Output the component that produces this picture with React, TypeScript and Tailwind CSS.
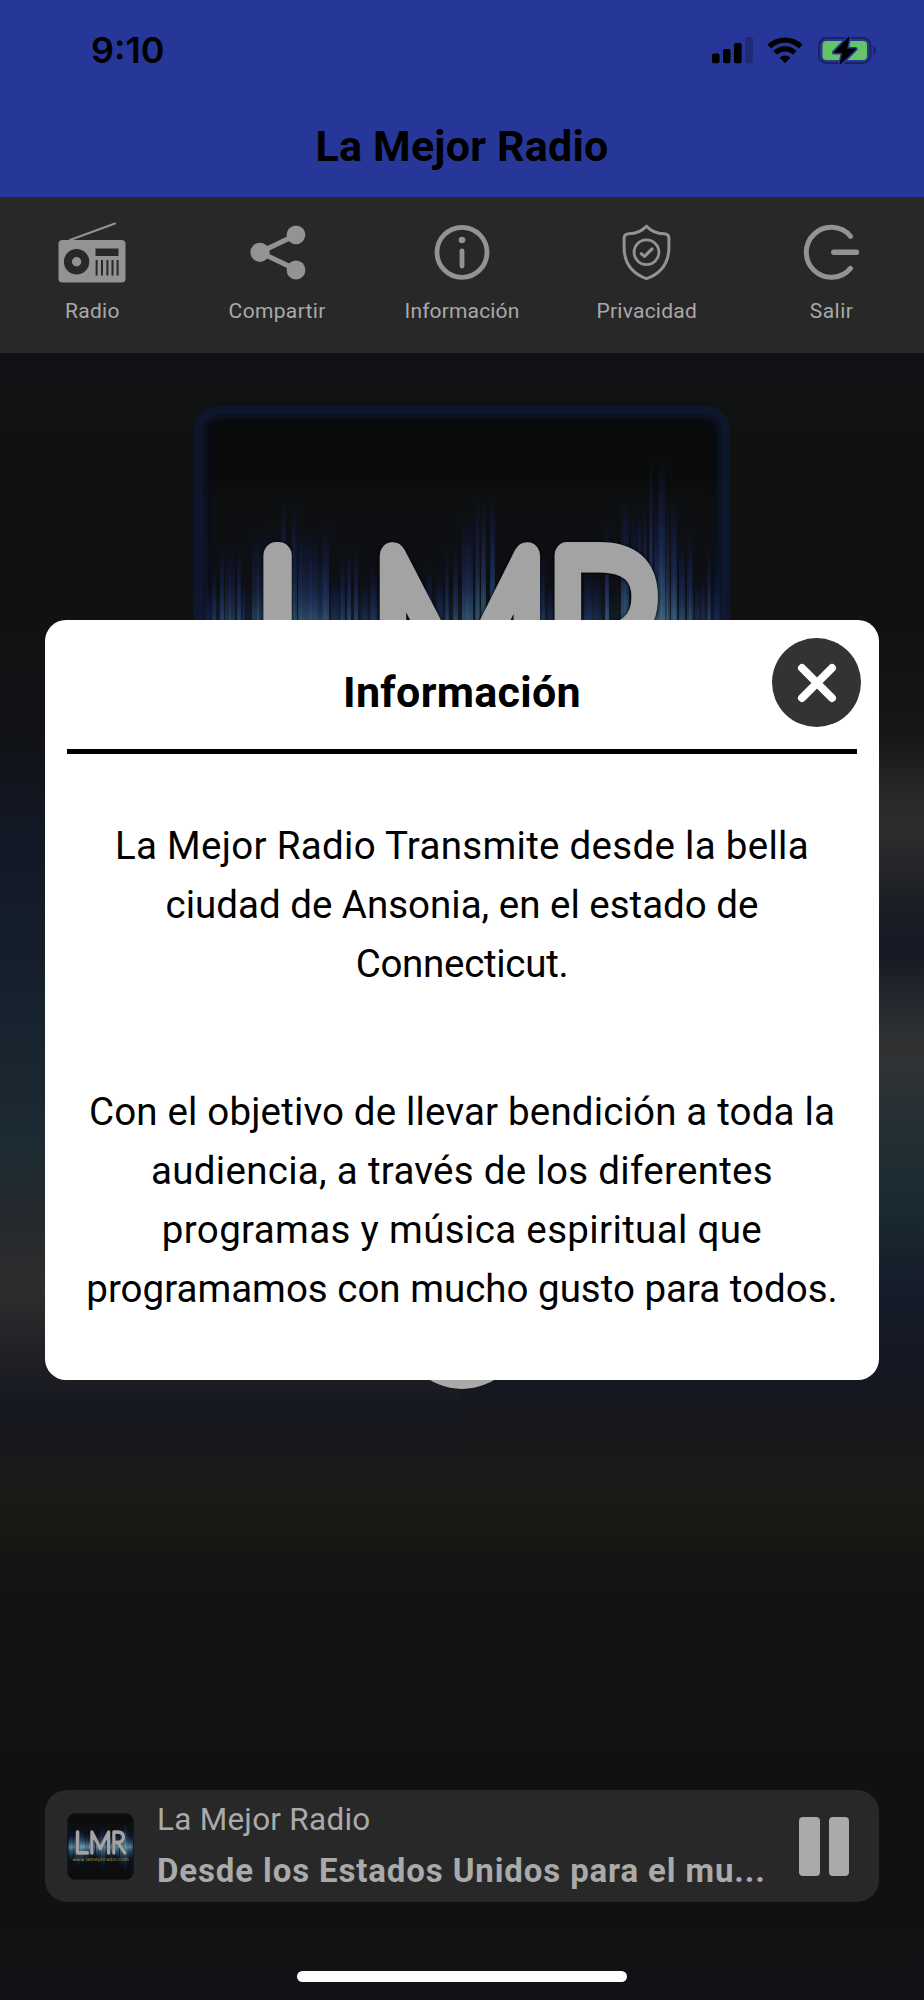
import clsx from 'clsx';

// x, width and top of every bar in the equalizer artwork (536x536 space)
const bars = [
   [12, 5, 177], [18, 4, 160], [26, 4, 140], [31, 10, 136], [43, 4, 140], [48, 3, 172],
   [58, 12, 121], [70, 16, 119], [87, 5, 90], [97, 6, 89], [104, 6, 119], [110, 14, 121],
   [124, 4, 140], [128, 7, 117], [137, 8, 168], [146, 5, 140], [153, 4, 140], [160, 4, 140],
   [167, 7, 170], [176, 7, 157], [200, 8, 177], [215, 6, 177], [232, 6, 158], [242, 7, 164],
   [251, 4, 138], [259, 5, 138], [268, 11, 107], [281, 5, 86], [287, 5, 88], [296, 5, 86],
   [303, 6, 168], [318, 8, 172], [335, 8, 172], [346, 5, 140], [354, 5, 177], [390, 8, 160],
   [398, 9, 164], [411, 4, 112], [427, 8, 88], [437, 6, 97], [443, 5, 97], [449, 4, 93],
   [455, 4, 49], [460, 4, 93], [464, 7, 49], [471, 5, 89], [477, 6, 88], [485, 6, 131],
   [493, 6, 119], [501, 5, 172], [507, 4, 168], [513, 4, 140], [520, 6, 157],
];

const Cover = ({ className, id }: { className?: string; id: string }) => (
   <svg viewBox="0 0 536 536" className={className}>
      <defs>
         <linearGradient id={`${id}-bar`} x1="0" y1="0" x2="0" y2="1">
            <stop offset="0" stopColor="#11183c" stopOpacity="0" />
            <stop offset="0.1" stopColor="#141d48" stopOpacity="0.5" />
            <stop offset="0.22" stopColor="#1e3260" stopOpacity="0.75" />
            <stop offset="0.36" stopColor="#3f6c88" stopOpacity="0.9" />
            <stop offset="0.5" stopColor="#7fb4cc" />
            <stop offset="0.64" stopColor="#3f6c88" stopOpacity="0.9" />
            <stop offset="0.9" stopColor="#141d48" stopOpacity="0.4" />
            <stop offset="1" stopColor="#11183c" stopOpacity="0" />
         </linearGradient>
         <linearGradient id={`${id}-bg`} x1="0" y1="0" x2="0" y2="1">
            <stop offset="0" stopColor="#0a0c0b" />
            <stop offset="0.14" stopColor="#0a0c0b" />
            <stop offset="0.18" stopColor="#0d0f11" />
            <stop offset="0.34" stopColor="#0d0f14" />
            <stop offset="0.5" stopColor="#1b3346" />
            <stop offset="0.68" stopColor="#0d1015" />
            <stop offset="1" stopColor="#0a0c0b" />
         </linearGradient>
         <filter id={`${id}-blur`} x="-10%" y="-10%" width="120%" height="120%">
            <feGaussianBlur stdDeviation="5" />
         </filter>
         <clipPath id={`${id}-clip`}>
            <rect width="536" height="536" rx={id === 'mini' ? 72 : 24} />
         </clipPath>
      </defs>
      <g clipPath={`url(#${id}-clip)`}>
         <rect width="536" height="536" fill={`url(#${id}-bg)`} />
         {bars.map(([x, w, top], idx) => (
            <g key={idx}>
               <rect x={x} y={top} width={w} height={(271 - top) * 2} fill={`url(#${id}-bar)`} opacity={idx % 3 ? 0.85 : 0.6} />
               <rect x={x + w / 2 - 0.8} y={top + 8} width="1.6" height={(263 - top) * 2} fill={`url(#${id}-bar)`} />
            </g>
         ))}
         <rect x="3" y="3" width="530" height="530" rx="22" fill="none" stroke="#101530" strokeWidth="16" filter={`url(#${id}-blur)`} />
         <g
            className="drop-shadow-[0_0_2px_#000]"
            fill="#a2a3a2"
            stroke="#a2a3a2"
            strokeWidth="28"
            strokeLinejoin="round"
            fontFamily="Lato"
            fontWeight="100"
            fontSize="237">
            <text transform="translate(57 316) scale(.92 1)">L</text>
            <text transform="translate(174 316) scale(.87 1)">M</text>
            <text transform="translate(349 316) scale(.86 1)">R</text>
         </g>
         {id === 'mini' && (
            <text x="268" y="384" fill="#a39e3c" fontFamily="DejaVu Sans" fontSize="38" textAnchor="middle" textLength="450">
               www.lamejorradio.com
            </text>
         )}
      </g>
   </svg>
);

const RadioIcon = () => (
   <svg viewBox="0 0 68 62" className="w-[68px] h-[62px]">
      <path d="M12 18 57 1.5" stroke="#929395" strokeWidth="2" strokeLinecap="round" />
      <rect x="0.5" y="18" width="67" height="42.5" rx="4" fill="#929395" />
      <circle cx="18.6" cy="39.7" r="8.7" fill="none" stroke="#282828" strokeWidth="8" />
      <path d="M37.5 26.5h23V34h-23z" fill="#282828" />
      <path d="M38.6 38v15.5M44 38v15.5M49.4 38v15.5M54.5 38v15.5M59.6 38v15.5" stroke="#282828" strokeWidth="2" />
   </svg>
);

const ShareIcon = () => (
   <svg viewBox="0 0 68 62" className="w-[68px] h-[62px]">
      <path d="M53 13 17 30.3 53 47.5" fill="none" stroke="#929395" strokeWidth="5" />
      <circle cx="53" cy="12.8" r="9.4" fill="#929395" />
      <circle cx="17" cy="30.3" r="9.6" fill="#929395" />
      <circle cx="53" cy="48" r="9.4" fill="#929395" />
   </svg>
);

const InfoIcon = () => (
   <svg viewBox="0 0 68 62" className="w-[68px] h-[62px]">
      <circle cx="34" cy="30.3" r="25" fill="none" stroke="#929395" strokeWidth="4.8" />
      <circle cx="34" cy="18" r="3.3" fill="#929395" />
      <path d="M34 29v15" stroke="#929395" strokeWidth="4.8" strokeLinecap="round" />
   </svg>
);

const ShieldIcon = () => (
   <svg viewBox="0 0 68 62" className="w-[68px] h-[62px]" fill="none" stroke="#929395" strokeLinecap="round" strokeLinejoin="round">
      <path
         d="M33.5 4.2C29 9 24 11.6 16 11.8 13.1 11.9 11.1 13.2 11.1 16.5V25C11.1 41 19 51.5 33.5 56.7 48 51.5 55.900 41 55.900 25V16.500C55.900 13.200 53.900 11.900 51 11.800 43 11.600 38 9 33.500 4.200Z"
         strokeWidth="3"
      />
      <circle cx="33.5" cy="30.3" r="12.4" strokeWidth="2.8" />
      <path d="M28.3 31.8 31.5 34.3 39 27" strokeWidth="3.2" />
   </svg>
);

const ExitIcon = () => (
   <svg viewBox="0 0 68 62" className="w-[68px] h-[62px]" fill="none" stroke="#929395" strokeWidth="5" strokeLinecap="round">
      <path d="M52.5 14.3A25 25 0 1 0 52.5 46.3" />
      <path d="M35.8 30.3H58.5" strokeWidth="5.4" />
   </svg>
);

const menu = [
   { label: 'Radio', icon: RadioIcon, tracking: 'tracking-[0.3px]' },
   { label: 'Compartir', icon: ShareIcon, tracking: 'tracking-[0.35px]' },
   { label: 'Información', icon: InfoIcon, tracking: 'tracking-[0.15px]' },
   { label: 'Privacidad', icon: ShieldIcon, tracking: 'tracking-[0.25px]' },
   { label: 'Salir', icon: ExitIcon, tracking: 'tracking-[0.5px]' },
];

const paragraphs = [
   [
      { text: 'La Mejor Radio Transmite desde la bella', tracking: 'tracking-[0.3px]' },
      { text: 'ciudad de Ansonia, en el estado de', tracking: 'tracking-[0px]' },
      { text: 'Connecticut.', tracking: 'tracking-[-0.3px]' },
   ],
   [
      { text: 'Con el objetivo de llevar bendición a toda la', tracking: 'tracking-[0.17px]' },
      { text: 'audiencia, a través de los diferentes', tracking: 'tracking-[0.3px]' },
      { text: 'programas y música espiritual que', tracking: 'tracking-[0.35px]' },
      { text: 'programamos con mucho gusto para todos.', tracking: 'tracking-[0px]' },
   ],
];

const StatusBar = () => (
   <div className="flex items-start justify-between pl-[91px] pr-[47px] pt-[28px] h-[120px]">
      <span className="font-[Inter] font-semibold text-[36px] leading-[44px]">9:10</span>
      <div className="flex pt-[8px]">
         <svg viewBox="0 0 42 30" className="w-[42px] h-[30px]">
            <rect x="0" y="17.5" width="7.5" height="9.8" rx="2" />
            <rect x="11" y="13" width="7.5" height="14.3" rx="2" />
            <rect x="22" y="7" width="7.7" height="20.3" rx="2" />
            <rect x="33" y="1" width="8" height="26.3" rx="2" fill="#1e2b75" />
         </svg>
         <svg viewBox="0 0 36 30" className="w-[36px] h-[30px] ml-[13px]" fill="none" stroke="#000">
            <path d="M2.3 10.5A22.5 22.5 0 0 1 33.7 10.5" strokeWidth="5.4" />
            <path d="M8.2 16.8A14 14 0 0 1 27.8 16.8" strokeWidth="5.2" />
            <path d="M18 27.3 12.6 21.8A7.7 7.7 0 0 1 23.4 21.8Z" fill="#000" stroke="none" />
         </svg>
         <svg viewBox="0 0 60 30" className="w-[60px] h-[30px] ml-[14px]">
            <rect x="2" y="2" width="51.5" height="25" rx="7.5" fill="none" stroke="#19245f" strokeWidth="2" />
            <rect x="5.5" y="5" width="44.5" height="19" rx="4" fill="#65c466" />
            <path d="M56.3 10v9.5c3.7-1.8 3.7-7.7 0-9.5Z" fill="#19245f" />
            <path
               d="M32 .8 17 16.5H26L23 28.5 38.5 13H30Z"
               fill="#000"
               stroke="#263799"
               strokeWidth="4"
               strokeLinejoin="round"
               paintOrder="stroke"
            />
            <path d="M32 .8 17.5 16.2H26L23 28.2 38.5 13H29.5Z" stroke="#000" strokeWidth="1" strokeLinejoin="round" />
         </svg>
      </div>
   </div>
);

const InfoModal = () => (
   <div className="absolute left-[45px] top-[620px] w-[834px] h-[760px] rounded-[21px] bg-white text-black px-[22px]">
      <h2 className="pt-[46px] text-center font-bold text-[43px] leading-[52px] tracking-[0.3px]">Información</h2>
      <button className="absolute right-[18px] top-[18px] w-[89px] h-[89px] rounded-full bg-[#333] flex items-center justify-center">
         <svg viewBox="0 0 40 40" className="w-[40px] h-[40px]">
            <path d="M5 5l30 30M35 5l-30 30" stroke="#fff" strokeWidth="8" strokeLinecap="round" />
         </svg>
      </button>
      <div className="mt-[31px] h-[5px] bg-black" />
      <div className="mt-[62px] flex flex-col gap-[89px] text-center text-[38.5px] leading-[59px] whitespace-nowrap">
         {paragraphs.map((lines, idx) => (
            <p key={idx}>
               {lines.map(({ text, tracking }) => (
                  <span key={text} className={clsx('block', tracking)}>
                     {text}
                  </span>
               ))}
            </p>
         ))}
      </div>
   </div>
);

const App = () => (
   <div className="relative w-[924px] h-[2000px] overflow-hidden bg-[#101111] font-[Roboto,sans-serif] flex flex-col">
      <header className="bg-[#263799] h-[197px] text-black shrink-0">
         <StatusBar />
         <h1 className="text-center font-bold text-[43px] leading-[52px] tracking-[0.2px]">La Mejor Radio</h1>
      </header>

      <nav className="grid grid-cols-5 h-[156px] bg-[#282828] pt-[25px] shrink-0">
         {menu.map(({ label, icon: Icon, tracking }) => (
            <div key={label} className="flex flex-col items-center">
               <Icon />
               <span className={clsx('mt-[13px] text-[21px] leading-[28px] text-[#a9a9a9]', tracking)}>{label}</span>
            </div>
         ))}
      </nav>

      <main className="relative flex-1 flex flex-col items-center">
         <div className="absolute inset-0 flex">
            <div className="w-1/2 bg-[linear-gradient(to_bottom,#111217_0px,#10120f_90px,#101112_280px,#101216_380px,#121825_480px,#15202c_620px,#1d2b33_800px,#26292c_870px,#2d2d2e_940px,#222327_990px,#15171f_1060px,#191a19_1120px,#1a1a15_1150px,#151513_1200px,#111213_1260px,#101111_1400px,#101110_1530px,#101212_1580px,#111217_1647px)]" />
            <div className="w-1/2 bg-[linear-gradient(to_bottom,#111217_0px,#10120f_90px,#101112_280px,#161616_380px,#2a2a2a_450px,#2c2c2c_480px,#191c24_560px,#161a24_600px,#2d2f31_680px,#303234_710px,#202e33_800px,#1a2a32_850px,#141a28_950px,#151821_1030px,#15171c_1060px,#191a19_1120px,#1a1a15_1150px,#151513_1200px,#111213_1260px,#101111_1400px,#101110_1530px,#101212_1580px,#111217_1647px)]" />
         </div>
         <Cover id="cover" className="relative mt-[53px] w-[536px] h-[536px]" />
         <div className="relative mt-[325px] w-[122px] h-[122px] rounded-full bg-[#aaa]" />

         <div className="relative mt-[401px] w-[834px] h-[112px] rounded-[22px] bg-[#282828] text-[#aaa] flex items-center px-[22px]">
            <Cover id="mini" className="w-[67px] h-[67px]" />
            <div className="ml-[23px] flex-1 h-full pt-[10px] whitespace-nowrap">
               <div className="text-[31.5px] leading-[40px] tracking-[0.25px]">La Mejor Radio</div>
               <div className="mt-[6px] font-bold text-[33px] leading-[50px] tracking-[0.87px]">
                  Desde los Estados Unidos para el mu...
               </div>
            </div>
            <div className="flex gap-[9px] mr-[8px]">
               <div className="w-[20.5px] h-[59px] rounded-[4px] bg-[#aaa]" />
               <div className="w-[20.5px] h-[59px] rounded-[4px] bg-[#aaa]" />
            </div>
         </div>
         <div className="relative mt-[69px] w-[330px] h-[11px] rounded-full bg-white shrink-0" />
      </main>

      <InfoModal />
   </div>
);

export default App;
